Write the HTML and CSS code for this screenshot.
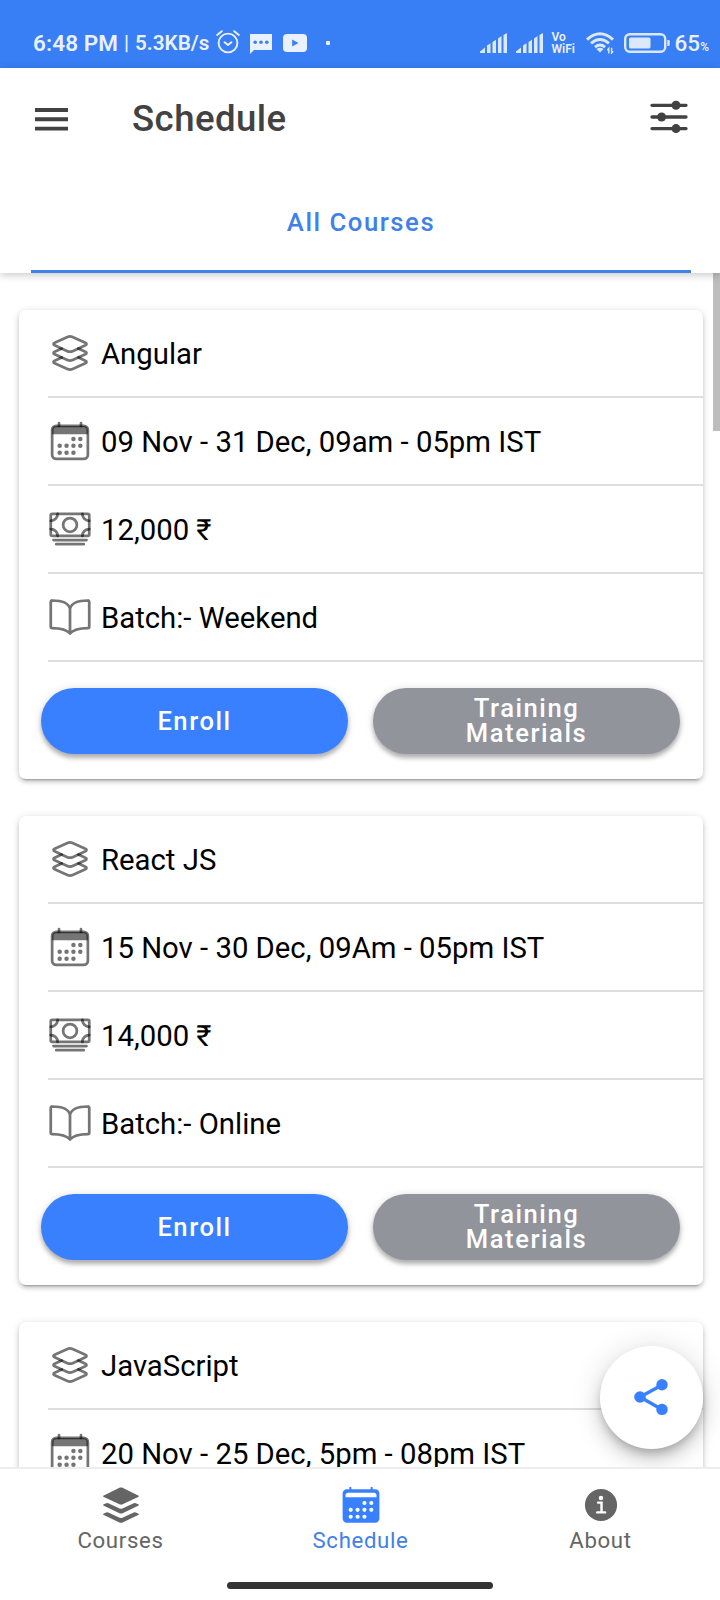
FILE: index.html
```html
<!DOCTYPE html>
<html lang="en">
<head>
<meta charset="utf-8">
<title>Schedule</title>
<link rel="stylesheet" href="styles.css">
</head>
<body>
<svg class="sprite" aria-hidden="true">
  <symbol id="layers" viewBox="0 0 512 512">
    <path class="line" d="M434.8 137.65l-149.36-68.1c-16.19-7.4-42.69-7.4-58.88 0L77.3 137.65c-17.6 8-17.6 21.09 0 29.09l148 67.5c16.89 7.7 44.69 7.7 61.58 0l148-67.5c17.52-8 17.52-21.1-.08-29.09z"/>
    <path class="line" d="M160 308.52l-82.7 37.11c-17.6 8-17.6 21.1 0 29.1l148 67.5c16.89 7.69 44.69 7.69 61.58 0l148-67.5c17.6-8 17.6-21.1 0-29.1l-79.94-38.47"/>
    <path class="line" d="M160 204.48l-82.8 37.16c-17.6 8-17.6 21.1 0 29.1l148 67.49c16.89 7.7 44.69 7.7 61.58 0l148-67.49c17.7-8 17.7-21.1.1-29.1L352 204.48"/>
  </symbol>
  <symbol id="calendar" viewBox="0 0 512 512">
    <rect class="line" x="48" y="80" width="416" height="384" rx="48"/>
    <path class="dot" d="M48 176v-48a48 48 0 0 1 48-48h320a48 48 0 0 1 48 48v48z"/>
    <path class="line" d="M128 48v32M384 48v32"/>
    <g class="dot">
      <circle cx="296" cy="232" r="26"/><circle cx="376" cy="232" r="26"/>
      <circle cx="136" cy="312" r="26"/><circle cx="216" cy="312" r="26"/><circle cx="296" cy="312" r="26"/><circle cx="376" cy="312" r="26"/>
      <circle cx="136" cy="392" r="26"/><circle cx="216" cy="392" r="26"/><circle cx="296" cy="392" r="26"/>
    </g>
  </symbol>
  <symbol id="cash" viewBox="0 0 512 512">
    <rect class="line" x="32" y="80" width="448" height="256" rx="16"/>
    <path class="line" d="M64 384h384M96 432h320"/>
    <circle class="line" cx="256" cy="208" r="80"/>
    <path class="line" d="M480 160a80 80 0 0 1-80-80M32 160a80 80 0 0 0 80-80M480 256a80 80 0 0 0-80 80M32 256a80 80 0 0 1 80 80"/>
  </symbol>
  <symbol id="book" viewBox="0 0 512 512">
    <path class="line" d="M256 160c16-63.16 76.43-95.41 208-96a15.94 15.94 0 0 1 16 16v288a16 16 0 0 1-16 16c-128 0-177.45 25.81-208 64-30.37-38-80-64-208-64-9.88 0-16-8.05-16-17.93V80a15.94 15.94 0 0 1 16-16c131.57.59 192 32.84 208 96zM256 160v288"/>
  </symbol>
  <symbol id="signal" viewBox="0 0 28 20">
    <path d="M0 20v-1.500l5-4V20zM7 12.600l3.500-2.400V20H7zM12.500 9l3.500-2.200V20h-3.500zM18 5.400l3.500-2.300V20H18zM23.500 2L27 0v20h-3.500z"/>
  </symbol>
</svg>

<div class="phone">
  <div class="status">
    <span class="clock">6:48 PM</span>
    <span class="pipe">|</span>
    <span class="speed">5.3KB/s</span>
    <svg class="alarm" viewBox="0 0 24 24"><g fill="none" stroke="#eaf1fe" stroke-width="1.900" stroke-linecap="round" stroke-linejoin="round"><circle cx="12" cy="13" r="9.400"/><path d="M1.200 5L5.800 1.200M22.800 5l-4.600-3.800M8.600 12.200l3.400 2.800 3.400-2.800"/></g></svg>
    <svg class="chat" viewBox="0 0 22 20"><path fill="#eaf1fe" d="M0 0h22v16H4l-4 4z"/><g fill="#3c7ef3"><circle cx="5.200" cy="8.300" r="1.800"/><circle cx="11" cy="8.300" r="1.800"/><circle cx="16.800" cy="8.300" r="1.800"/></g></svg>
    <svg class="video" viewBox="0 0 24 18"><rect fill="#eaf1fe" width="24" height="18" rx="4"/><path fill="#3c7ef3" d="M9.200 5.500v7l6.300-3.500z"/></svg>
    <span class="more"></span>
    <span class="spacer"></span>
    <svg class="signal"><use href="#signal"/></svg>
    <svg class="signal second"><use href="#signal"/></svg>
    <span class="vowifi"><span>Vo</span><span>WiFi</span></span>
    <svg class="wifi" viewBox="0 0 28 22"><g fill="none" stroke="#dce8fd" stroke-width="2.900"><path d="M1 7.600Q14-4.200 27 7.600M5 11.400q9-7.800 18 0M9 15.200q5-4.200 10 0"/></g><path fill="#dce8fd" d="M10.500 17q3.500-2.600 7 0L14 20.500z"/><path fill="none" stroke="#dce8fd" stroke-width="1.400" d="M22.800 21.500v-5l-1.500 1.800M25.600 15.800v5.300l1.500-1.800"/></svg>
    <svg class="battery" viewBox="0 0 46 20"><rect x="1.200" y="1.200" width="40" height="17.600" rx="4.500" fill="none" stroke="#dce8fd" stroke-width="2.400"/><rect x="5" y="4.500" width="21.500" height="11" rx="1.500" fill="#dce8fd"/><path fill="#dce8fd" d="M43.300 7h1.200q1.200 0 1.200 1.200v3.600q0 1.200-1.200 1.200h-1.200z"/></svg>
    <span class="charge">65</span><span class="percent">%</span>
  </div>

  <header class="header">
    <div class="toolbar">
      <svg class="menu" viewBox="0 0 33 23"><path fill="#424242" d="M0 0h33v3.900H0zM0 9.300h33v3.900H0zM0 18.700h33v3.900H0z"/></svg>
      <h1 class="title">Schedule</h1>
      <svg class="options" viewBox="0 0 38 34"><path stroke="#424242" stroke-width="3.300" stroke-linecap="round" d="M2 5.300h34M2 17h34M2 28.600h34"/><g fill="#424242"><circle cx="26" cy="5.300" r="4.500"/><circle cx="11.600" cy="17" r="4.500"/><circle cx="26" cy="28.600" r="4.500"/></g></svg>
    </div>
    <div class="segment">All Courses</div>
  </header>

  <main class="content">
    <section class="card">
      <div class="row"><svg class="icon"><use href="#layers"/></svg><span>Angular</span></div>
      <div class="row"><svg class="icon"><use href="#calendar"/></svg><span>09 Nov - 31 Dec, 09am - 05pm IST</span></div>
      <div class="row"><svg class="icon"><use href="#cash"/></svg><span>12,000 ₹</span></div>
      <div class="row"><svg class="icon"><use href="#book"/></svg><span>Batch:- Weekend</span></div>
      <div class="actions"><button class="button primary">Enroll</button><button class="button medium">Training<br>Materials</button></div>
    </section>
    <section class="card">
      <div class="row"><svg class="icon"><use href="#layers"/></svg><span>React JS</span></div>
      <div class="row"><svg class="icon"><use href="#calendar"/></svg><span>15 Nov - 30 Dec, 09Am - 05pm IST</span></div>
      <div class="row"><svg class="icon"><use href="#cash"/></svg><span>14,000 ₹</span></div>
      <div class="row"><svg class="icon"><use href="#book"/></svg><span>Batch:- Online</span></div>
      <div class="actions"><button class="button primary">Enroll</button><button class="button medium">Training<br>Materials</button></div>
    </section>
    <section class="card">
      <div class="row"><svg class="icon"><use href="#layers"/></svg><span>JavaScript</span></div>
      <div class="row"><svg class="icon"><use href="#calendar"/></svg><span>20 Nov - 25 Dec, 5pm - 08pm IST</span></div>
    </section>
    <div class="scrollbar"></div>
    <div class="fab">
      <svg class="share" viewBox="0 0 34 38"><path fill="none" stroke="#3880ff" stroke-width="3.400" d="M28 7L6 19l22 12.400"/><g fill="#3880ff"><circle cx="28" cy="6.700" r="5.700"/><circle cx="6" cy="19" r="5.800"/><circle cx="28" cy="31.400" r="5.700"/></g></svg>
    </div>
  </main>

  <nav class="tabs">
    <div class="tab">
      <svg class="tab-icon" viewBox="0 0 512 512"><path d="M256 252c-6 0-12-1-18-4L56 162c-10-5-10-13 0-18L238 56c12-5 24-5 36 0l182 88c10 5 10 13 0 18l-182 86c-6 3-12 4-18 4zM456 247c10 5 10 13 0 18l-182 87c-12 5-24 5-36 0L56 265c-10-5-10-13 0-18l28-12q12-5 24 0l132 62q16 7 32 0l132-62q12-5 24 0zM456 354c10 5 10 13 0 18l-182 87c-12 5-24 5-36 0L56 372c-10-5-10-13 0-18l28-12q12-5 24 0l132 62q16 7 32 0l132-62q12-5 24 0z"/></svg>
      <span>Courses</span>
    </div>
    <div class="tab selected">
      <svg class="tab-icon" viewBox="0 0 512 512"><path d="M120 50q12-10 24 0v24h224V50q12-10 24 0v24h30a48 48 0 0 1 48 48v292a48 48 0 0 1-48 48H90a48 48 0 0 1-48-48V122a48 48 0 0 1 48-48h30z"/><path fill="#fff" d="M76 166v-24q0-30 30-30h300q30 0 30 30v24z"/><g fill="#fff"><circle cx="296" cy="232" r="24"/><circle cx="376" cy="232" r="24"/><circle cx="136" cy="312" r="24"/><circle cx="216" cy="312" r="24"/><circle cx="296" cy="312" r="24"/><circle cx="376" cy="312" r="24"/><circle cx="136" cy="392" r="24"/><circle cx="216" cy="392" r="24"/><circle cx="296" cy="392" r="24"/></g></svg>
      <span>Schedule</span>
    </div>
    <div class="tab">
      <svg class="tab-icon" viewBox="0 0 512 512"><circle cx="256" cy="256" r="187"/><circle cx="256" cy="174" r="26" fill="#fff"/><path fill="none" stroke="#fff" stroke-width="28" stroke-linecap="round" d="M222 228h40v112M212 342h92"/></svg>
      <span>About</span>
    </div>
  </nav>
  <div class="gesture"><div class="handle"></div></div>
</div>
</body>
</html>
```

FILE: styles.css
```css
* { box-sizing: border-box; }

body {
  margin: 0;
  background: #fff;
  font-family: Roboto, "Liberation Sans", sans-serif;
}

.sprite { display: none; }

svg { display: block; flex: none; }

.phone {
  display: flex;
  flex-direction: column;
  width: 720px;
  height: 1600px;
  overflow: hidden;
  background: #fff;
}

/* Status bar */
.status {
  display: flex;
  align-items: center;
  height: 68px;
  flex: none;
  padding: 18px 11px 0 33px;
  background: #387ef5;
  color: #eaf1fe;
  font-weight: 600;
  line-height: 26px;
  white-space: nowrap;
}

.clock { width: 91px; font-size: 22.5px; letter-spacing: 0.1px; }
.pipe { width: 11px; font-size: 20px; font-weight: 500; }
.speed { width: 81px; font-size: 20.7px; }
.alarm { width: 24px; height: 24px; margin-top: -2px; }
.chat { width: 22px; height: 20px; margin-left: 10px; margin-top: 2px; }
.video { width: 24px; height: 18px; margin-left: 11px; margin-top: -1px; }
.more { width: 4px; height: 4px; margin-left: 19px; background: #eaf1fe; border-radius: 1px; }
.spacer { flex: 1; }
.signal { width: 28px; height: 20px; fill: #dce8fd; }
.second { margin-left: 8px; }

.vowifi {
  display: flex;
  flex-direction: column;
  width: 25px;
  margin-left: 8px;
  font-size: 12px;
  line-height: 12px;
}

.wifi { width: 28px; height: 22px; margin-left: 9px; }
.battery { width: 46px; height: 20px; margin-left: 10px; }
.charge { margin-left: 5px; font-size: 22.5px; font-weight: 500; }
.percent { font-size: 12px; padding-top: 8px; }

/* Header */
.header {
  position: relative;
  z-index: 2;
  flex: none;
  height: 205px;
  padding: 0 29px 0 31px;
  background: #fff;
  box-shadow: 0 2px 8px rgba(0, 0, 0, 0.22);
}

.toolbar {
  display: flex;
  align-items: center;
  height: 102px;
  padding: 0 3px 0 4px;
}

.menu { width: 33px; height: 23px; }

.title {
  flex: 1;
  margin: -2px 0 0 64px;
  color: #424242;
  font-size: 36.6px;
  font-weight: 500;
  letter-spacing: 0.45px;
}

.options { width: 38px; height: 34px; margin-top: -4px; }

.segment {
  height: 103px;
  border-bottom: 3px solid #3f80ea;
  color: #3f80ea;
  font-size: 25.7px;
  font-weight: 500;
  letter-spacing: 1.54px;
  line-height: 104px;
  text-align: center;
}

/* Course list */
.content {
  position: relative;
  flex: none;
  display: flex;
  flex-direction: column;
  gap: 37px;
  height: 1194px;
  padding: 37px 17px 0 19px;
  overflow: hidden;
}

.card {
  flex: none;
  height: 469px;
  border-radius: 7px;
  background: #fff;
  box-shadow: 0 5px 2px -4px rgba(0, 0, 0, 0.25), 0 3px 4px rgba(0, 0, 0, 0.16), 0 1px 9px rgba(0, 0, 0, 0.12);
}

.row {
  display: flex;
  align-items: center;
  height: 88px;
  margin-left: 29px;
  border-bottom: 2px solid #dedede;
  color: #000;
  font-size: 29.3px;
  white-space: nowrap;
}

.row span { padding-top: 1px; }

.icon { width: 44px; height: 44px; margin-right: 9px; }

.line {
  fill: none;
  stroke: rgba(0, 0, 0, 0.54);
  stroke-width: 32;
  stroke-linecap: round;
  stroke-linejoin: round;
}

.dot { fill: rgba(0, 0, 0, 0.54); }

.actions {
  display: grid;
  grid-template-columns: 1fr 1fr;
  gap: 25px;
  padding: 26px 23px 0 22px;
}

.button {
  height: 66px;
  padding: 0;
  border: 0;
  border-radius: 33px;
  color: #fff;
  font-family: inherit;
  font-size: 25.6px;
  font-weight: 500;
  letter-spacing: 1.54px;
  line-height: 25px;
  box-shadow: 0 4px 4px rgba(0, 0, 0, 0.25), 0 1px 8px rgba(0, 0, 0, 0.14);
}

.primary { background: #3880ff; }
.medium { background: #92949c; }

.scrollbar {
  position: absolute;
  top: 0;
  right: 0;
  width: 7px;
  height: 158px;
  background: #bdbdbd;
}

.fab {
  position: absolute;
  right: 17px;
  bottom: 18px;
  display: flex;
  align-items: center;
  justify-content: center;
  width: 103px;
  height: 103px;
  border-radius: 50%;
  background: #fff;
  box-shadow: 0 6px 9px -2px rgba(0, 0, 0, 0.2), 0 11px 18px rgba(0, 0, 0, 0.14), 0 2px 33px rgba(0, 0, 0, 0.12);
}

.share { width: 34px; height: 38px; margin-right: 1px; margin-bottom: 1px; }

/* Bottom tabs */
.tabs {
  position: relative;
  display: grid;
  grid-template-columns: repeat(3, 1fr);
  flex: none;
  height: 101px;
  border-top: 2px solid #ededed;
  background: #fff;
}

.tab {
  display: flex;
  flex-direction: column;
  align-items: center;
  padding: 14px 0 0 1px;
  color: #656565;
  fill: #656565;
  font-size: 22.2px;
  letter-spacing: 0.65px;
  line-height: 27px;
}

.selected { color: #3f80ea; fill: #3880ff; }

.tab-icon { width: 44px; height: 44px; }

.gesture { display: flex; justify-content: center; padding-top: 14px; }

.handle { width: 266px; height: 7px; border-radius: 4px; background: #333; }
```
